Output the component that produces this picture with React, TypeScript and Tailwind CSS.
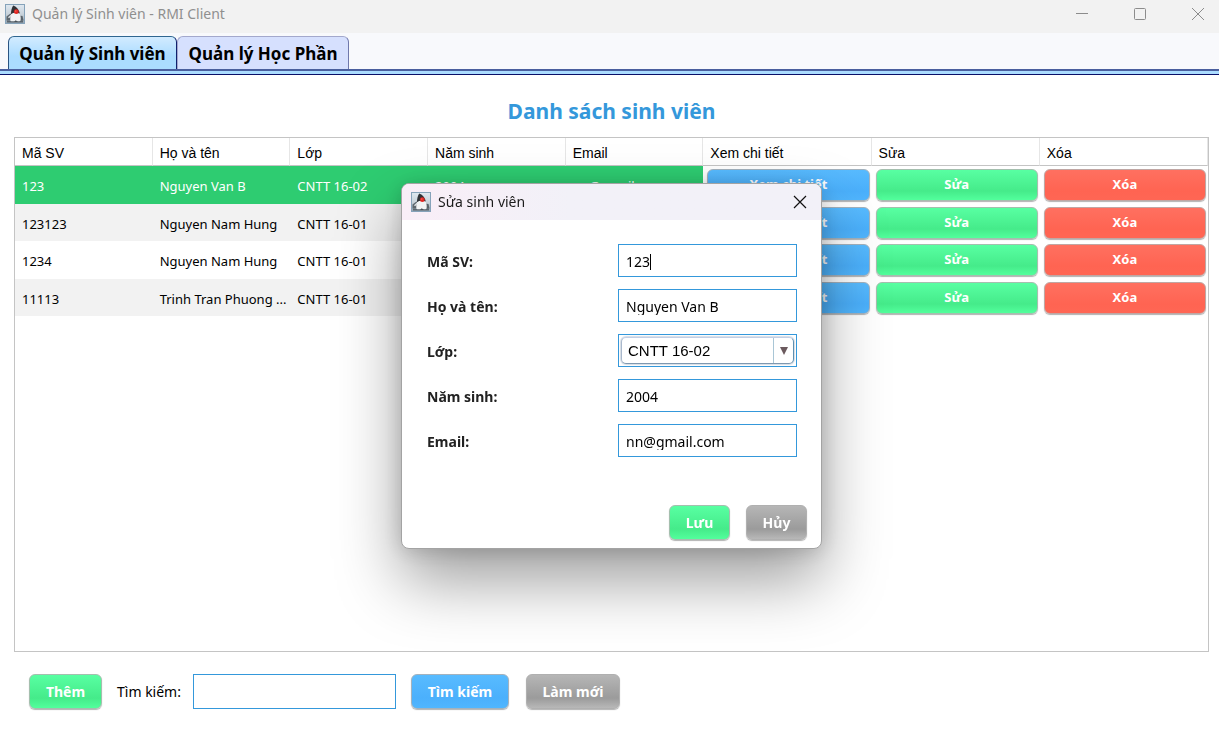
import { useState } from "react";
import type { ReactNode } from "react";

type Tone = "green" | "blue" | "red" | "gray";

const tones: Record<Tone, string> = {
  green: "from-[#58ffa2] via-[#45eb8a] to-[#52ff9c] border-[#a4bfae]",
  blue: "from-[#58bbff] via-[#4bb0fc] to-[#50b6ff] border-[#a3b2be]",
  red: "from-[#ff7060] via-[#ff6452] to-[#ff6654] border-[#c0a6a3]",
  gray: "from-[#b6b6b6] via-[#9b9b9b] to-[#b8b8b8] border-[#b0b0b0]",
};

function GlossButton({ tone, size, children }: { tone: Tone; size: string; children: ReactNode }) {
  return (
    <button
      type="button"
      className={`rounded-md border bg-gradient-to-b via-70% font-bold whitespace-nowrap text-white shadow-[0_1px_1px_rgba(0,0,0,0.3)] ${tones[tone]} ${size}`}
    >
      {children}
    </button>
  );
}

function DukeIcon() {
  return (
    <svg viewBox="0 0 20 20" className="size-5 shrink-0" aria-hidden="true">
      <defs>
        <linearGradient id="duke-bg" x1="0" y1="0" x2="0" y2="1">
          <stop offset="0" stopColor="#dfe8f0" />
          <stop offset="0.5" stopColor="#c9d3db" />
          <stop offset="1" stopColor="#93a3b0" />
        </linearGradient>
      </defs>
      <rect x="0.5" y="0.5" width="19" height="19" fill="url(#duke-bg)" stroke="#86a3ba" />
      <path d="M1.500 12.500 5.500 9.500l2.500 2-1.500 4.500-5 .5z" fill="#5d666d" />
      <path d="M13.500 11.500l4 .5 1 4.500-4 .5z" fill="#5a636a" />
      <path d="M2 16.500h16v2H2z" fill="#5b666f" />
      <path d="M8.200 1.500C9.800 1.800 13.800 4.500 14.800 9.500L6 10.500C5.800 7 6.800 3.500 8.200 1.500z" fill="#303236" />
      <path d="M6 10.200c2.500-1.700 6-1.700 8.700-.5 1 2.500 1.300 4.800.8 7-1.800.9-3.300.5-4.800 0-1.800.7-3.700.9-5.200.3-.5-2.200-.2-4.500.5-6.800z" fill="#f2f3f4" />
      <path d="M6.200 11.200 3.500 13.800" stroke="#dfe3e6" strokeWidth="1.400" />
      <path d="M9.500 17.800l1.300-1.500 1.400 1.500z" fill="#43494e" />
      <circle cx="11.300" cy="7.700" r="2.400" fill="#e02622" />
      <circle cx="10.800" cy="7.100" r="0.800" fill="#f4605a" />
    </svg>
  );
}

const columns = [
  { name: "Mã SV", width: "w-[11.54%]" },
  { name: "Họ và tên", width: "w-[11.54%]" },
  { name: "Lớp", width: "w-[11.54%]" },
  { name: "Năm sinh", width: "w-[11.54%]" },
  { name: "Email", width: "w-[11.54%]" },
  { name: "Xem chi tiết", width: "w-[14.1%]" },
  { name: "Sửa", width: "w-[14.1%]" },
  { name: "Xóa", width: "w-[14.1%]" },
];

const students = [
  ["123", "Nguyen Van B", "CNTT 16-02", "2004", "nn@gmail.com"],
  ["123123", "Nguyen Nam Hung", "CNTT 16-01", "", ""],
  ["1234", "Nguyen Nam Hung", "CNTT 16-01", "", ""],
  ["11113", "Trinh Tran Phuong ...", "CNTT 16-01", "", ""],
];

const rowStyles = [
  "h-[38px] bg-[#2ecc71] text-white",
  "h-[37px] bg-[#f2f2f2] text-black",
  "h-[38px] bg-white text-black",
  "h-[37px] bg-[#f2f2f2] text-black",
];

const actions: { label: string; tone: Tone }[] = [
  { label: "Xem chi tiết", tone: "blue" },
  { label: "Sửa", tone: "green" },
  { label: "Xóa", tone: "red" },
];

function StudentTable() {
  return (
    <table className="w-full table-fixed border-separate border-spacing-0 text-left">
      <colgroup>
        {columns.map((c) => (
          <col key={c.name} className={c.width} />
        ))}
      </colgroup>
      <thead>
        <tr className="h-7 font-['Liberation_Sans',sans-serif] text-sm">
          {columns.map((c) => (
            <th
              key={c.name}
              scope="col"
              className="border-r border-b border-r-[#e6e6e6] border-b-[#c4c4c4] px-[7px] pt-[2px] pb-0 font-normal"
            >
              {c.name}
            </th>
          ))}
        </tr>
      </thead>
      <tbody>
        {students.map((s, i) => (
          <tr key={s[0]} className={rowStyles[i]}>
            {s.map((v, j) => (
              <td key={j} className="pt-[2px] pr-0 pb-0 pl-[7px] text-[13px] leading-5 whitespace-nowrap">
                {v}
              </td>
            ))}
            {actions.map((a) => (
              <td key={a.label} className="bg-white py-0 pr-[2px] pl-1 align-middle">
                <GlossButton tone={a.tone} size="block h-8 w-full text-[13px]">{a.label}</GlossButton>
              </td>
            ))}
          </tr>
        ))}
      </tbody>
    </table>
  );
}

function Field({ id, label, children }: { id: string; label: string; children: ReactNode }) {
  return (
    <div className="flex h-[33px] items-center justify-between">
      <label htmlFor={id} className="pt-[3px] text-sm font-bold text-[#222]">
        {label}
      </label>
      {children}
    </div>
  );
}

function TextField({ id, label, initial, focus }: { id: string; label: string; initial: string; focus?: boolean }) {
  const [value, setValue] = useState(initial);
  return (
    <Field id={id} label={label}>
      <div className="flex h-[33px] w-[179px] items-center border border-[#3498db] bg-white px-[7px] pt-[3px]">
        <input
          id={id}
          value={value}
          onChange={(e) => setValue(e.target.value)}
          className={`h-4 min-w-0 text-sm text-black outline-none ${focus ? "field-sizing-content border-r border-black" : "w-full"}`}
        />
      </div>
    </Field>
  );
}

function EditDialog() {
  return (
    <div className="fixed inset-0 flex items-center justify-center pt-[2px] pl-1">
      <section
        role="dialog"
        aria-labelledby="dialog-title"
        className="w-[421px] overflow-hidden rounded-lg border border-[#a3a3a3] bg-white shadow-[0_32px_64px_rgba(0,0,0,0.38),0_2px_20px_rgba(0,0,0,0.16)]"
      >
        <header className="flex h-9 items-center gap-[7px] bg-gradient-to-r from-[#f9eef7] to-[#f2f1f8] to-40% pr-[14px] pl-[9px]">
          <DukeIcon />
          <h2 id="dialog-title" className="flex-1 text-sm text-[#1b1b1b]">Sửa sinh viên</h2>
          <button type="button" aria-label="Close">
            <svg viewBox="0 0 14 14" className="size-[14px]" fill="none" stroke="#111" strokeWidth="1.200">
              <path d="M1 1l12 12M13 1 1 13" />
            </svg>
          </button>
        </header>
        <form className="flex flex-col gap-3 pt-6 pr-6 pl-[25px]">
          <TextField id="student-id" label="Mã SV:" initial="123" focus />
          <TextField id="student-name" label="Họ và tên:" initial="Nguyen Van B" />
          <Field id="student-class" label="Lớp:">
            <div className="relative flex h-[33px] w-[179px] border border-[#3498db] bg-white p-[2px]">
              <select
                id="student-class"
                className="w-full appearance-none rounded-[5px] border border-t-[#c3cfe6] border-r-[#5f8fb0] border-b-[#7f98b0] border-l-[#a9b8cc] bg-white pt-[2px] pl-[6px] font-['Liberation_Sans',sans-serif] text-[15px] text-black shadow-[0_0_1px_1px_rgba(150,170,190,0.4)]"
              >
                <option>CNTT 16-02</option>
                <option>CNTT 16-01</option>
              </select>
              <span className="pointer-events-none absolute inset-y-[3px] right-[3px] flex w-5 items-center justify-center border-l border-[#a9c6d6]">
                <svg viewBox="0 0 8 8" className="size-2" fill="#6b5a5e">
                  <path d="M0 0h8L4 8z" />
                </svg>
              </span>
            </div>
          </Field>
          <TextField id="student-year" label="Năm sinh:" initial="2004" />
          <TextField id="student-email" label="Email:" initial="nn@gmail.com" />
        </form>
        <footer className="flex justify-end gap-4 pt-12 pr-[14px] pb-2">
          <GlossButton tone="green" size="h-[35px] w-[61px] text-sm">Lưu</GlossButton>
          <GlossButton tone="gray" size="h-[35px] w-[61px] text-sm">Hủy</GlossButton>
        </footer>
      </section>
    </div>
  );
}

export default function App() {
  return (
    <div className="flex min-h-screen flex-col bg-white font-['Noto_Sans',sans-serif] text-black">
      <header className="flex h-[33px] items-center bg-[#f2f2f2] pb-[5px] pl-[5px]">
        <DukeIcon />
        <h1 className="ml-[7px] flex-1 text-sm text-[#8f8f8f]">Quản lý Sinh viên - RMI Client</h1>
        <div className="flex gap-[46px] pr-[15px] text-[#8c8c8c]">
          <button type="button" aria-label="Minimize">
            <svg viewBox="0 0 12 12" className="size-3" fill="none" stroke="currentColor">
              <path d="M0 5.500h12" />
            </svg>
          </button>
          <button type="button" aria-label="Maximize">
            <svg viewBox="0 0 12 12" className="size-3" fill="none" stroke="currentColor">
              <rect x="0.500" y="0.500" width="11" height="11" rx="1" />
            </svg>
          </button>
          <button type="button" aria-label="Close">
            <svg viewBox="0 0 12 12" className="size-3" fill="none" stroke="currentColor">
              <path d="M0 0l12 12M12 0 0 12" />
            </svg>
          </button>
        </div>
      </header>

      <nav className="bg-[#f8f9fc] pt-[3px]">
        <div role="tablist" className="flex h-[33px] pl-2">
          <button
            type="button"
            role="tab"
            aria-selected="true"
            className="w-[169px] rounded-t-md border border-b-0 border-t-[#2f6690] border-r-[#10206e] border-l-[#2a5482] bg-gradient-to-b from-[#d2ebff] to-[#abdcff] to-60% pt-[2px] text-[17px] font-bold whitespace-nowrap"
          >
            Quản lý Sinh viên
          </button>
          <button
            type="button"
            role="tab"
            aria-selected="false"
            className="w-[172px] rounded-t-md border border-b-0 border-t-[#a3a8cc] border-r-[#7078ac] border-l-[#a3a8cc] bg-[#d6e0fe] pt-[2px] text-[17px] font-bold whitespace-nowrap"
          >
            Quản lý Học Phần
          </button>
        </div>
        <div className="h-[6px] border-t-2 border-b border-t-[#4a5f9e] border-b-[#0a1068] bg-[#abdcff]" />
      </nav>

      <main className="flex flex-1 flex-col pt-5 pr-[10px] pb-[21px] pl-[14px]">
        <h2 className="h-[42px] text-center text-[21px] leading-8 font-bold text-[#3498db]">Danh sách sinh viên</h2>
        <div className="flex-1 border border-[#c4c4c4] bg-white">
          <StudentTable />
        </div>
        <form className="flex items-center pt-[22px] pl-[15px]">
          <GlossButton tone="green" size="h-[35px] w-[73px] text-sm">Thêm</GlossButton>
          <label htmlFor="search" className="mr-3 ml-[15px] text-sm">Tìm kiếm:</label>
          <div className="mr-[15px] flex h-[35px] w-[203px] items-center border border-[#3498db] bg-white px-[7px]">
            <input id="search" className="w-full min-w-0 text-sm outline-none" />
          </div>
          <GlossButton tone="blue" size="mr-[17px] h-[35px] w-[98px] text-sm">Tìm kiếm</GlossButton>
          <GlossButton tone="gray" size="h-[35px] w-[94px] text-sm">Làm mới</GlossButton>
        </form>
      </main>

      <EditDialog />
    </div>
  );
}
